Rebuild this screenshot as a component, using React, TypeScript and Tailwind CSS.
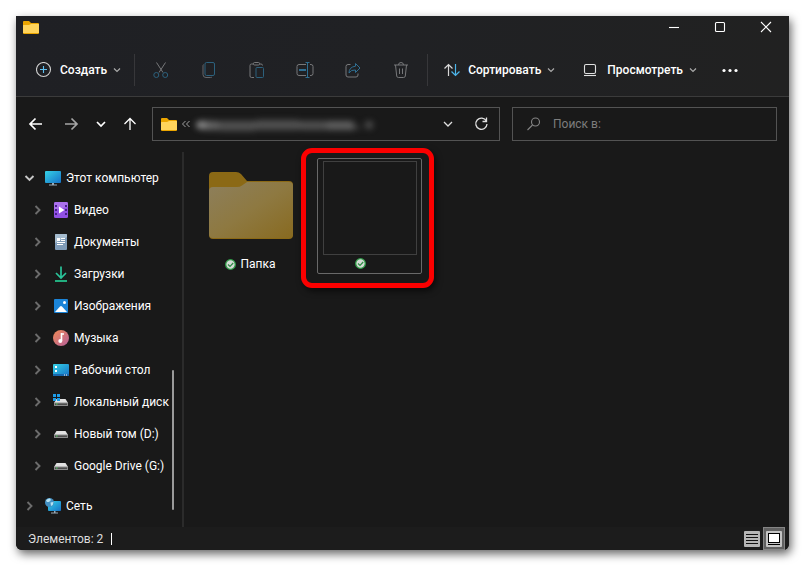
import { ReactNode } from "react";

const tree = [
    { label: "Видео", icon: <VideoIcon /> },
    { label: "Документы", icon: <DocumentIcon /> },
    { label: "Загрузки", icon: <DownloadIcon /> },
    { label: "Изображения", icon: <PicturesIcon /> },
    { label: "Музыка", icon: <MusicIcon /> },
    { label: "Рабочий стол", icon: <DesktopIcon /> },
    { label: "Локальный диск", icon: <DriveIcon system /> },
    { label: "Новый том (D:)", icon: <DriveIcon /> },
    { label: "Google Drive (G:)", icon: <DriveIcon /> },
];

export default function App() {
    return (
        <div className="min-h-screen bg-white p-4 flex flex-col font-['Roboto','Noto_Sans',sans-serif] text-xs text-white">
            <div className="flex-1 flex flex-col bg-[#191919] rounded-b-md shadow-[2px_4px_10px_rgba(0,0,0,0.6)]">
                <header className="bg-linear-to-r from-[#1f2024] via-[#202124] to-[#212121] border-b border-[#3b3b3b]">
                    <TitleBar />
                    <Toolbar />
                </header>
                <AddressRow />
                <div className="flex-1 flex">
                    <Sidebar />
                    <Files />
                </div>
                <StatusBar />
            </div>
        </div>
    );
}

function TitleBar() {
    return (
        <div className="h-[22px] flex items-center pl-[7px]">
            <FolderSmall />
            <div className="ml-auto flex h-full">
                <WindowButton label="Свернуть">
                    <path d="M1 6.5h10" />
                </WindowButton>
                <WindowButton label="Развернуть">
                    <rect x="1.5" y="1.5" width="9" height="9" rx="1" />
                </WindowButton>
                <WindowButton label="Закрыть">
                    <path d="M1 1l10 10M11 1L1 11" />
                </WindowButton>
            </div>
        </div>
    );
}

function WindowButton({ label, children }: { label: string; children: ReactNode }) {
    return (
        <button aria-label={label} className="w-[46px] flex items-center justify-center">
            <svg className="w-3 h-3" viewBox="0 0 12 12" fill="none" stroke="#fff" strokeWidth="1.1">
                {children}
            </svg>
        </button>
    );
}

function Toolbar() {
    return (
        <div className="h-[58px] pt-4 pb-2.5 pl-5 flex items-stretch font-medium">
            <button className="flex items-center gap-2">
                <svg className="w-4 h-4" viewBox="0 0 16 16" fill="none">
                    <circle cx="7.5" cy="7.5" r="7" stroke="#d0d0d0" strokeWidth="1.1" />
                    <path d="M7.5 4v7M4 7.5h7" stroke="#5fc0f0" strokeWidth="1.1" />
                </svg>
                Создать
                <ChevronSmall />
            </button>
            <div className="w-px bg-[#37373a] ml-[13px] mr-0.5" />
            <ToolButton label="Вырезать">
                <path d="M3.5 .5l6.500 10M12.500 .5L6 10.500" stroke="#77787a" />
                <circle cx="3.300" cy="13" r="2.500" stroke="#2c617d" />
                <circle cx="12.200" cy="13" r="2.500" stroke="#2c617d" />
            </ToolButton>
            <ToolButton label="Копировать">
                <path d="M2.500 2.500q-.5.5-.5 1.500v8.500q0 3 3 3h4.500q1 0 1.500-.5" stroke="#66676a" />
                <rect x="4" y=".5" width="9.500" height="13" rx="1.500" stroke="#2c617d" />
            </ToolButton>
            <ToolButton label="Вставить">
                <path d="M4.500 2H2.500Q1 2 1 3.500v10.500Q1 15.500 2.500 15.500h2.500M10.500 2h1.500q1.500 0 1.500 1.500" stroke="#77787a" />
                <rect x="4.500" y=".5" width="6" height="2.500" rx="1" stroke="#77787a" />
                <rect x="7" y="5.500" width="7.500" height="10" rx="1" stroke="#2c617d" />
            </ToolButton>
            <ToolButton label="Переименовать">
                <path d="M9 2.500H2Q0 2.500 0 4.500v7q0 2 2 2h7M13 2.500h1q2 0 2 2v7q0 2-2 2h-1" stroke="#77787a" />
                <path d="M8.500 .5h4M10.500 .5v15M8.500 15.500h4" stroke="#2f6f92" />
                <path d="M2 8h7" stroke="#2f6f92" strokeWidth="2" />
            </ToolButton>
            <ToolButton label="Поделиться">
                <path d="M5.500 2.500H3Q1 2.500 1 4.500v8.500q0 2 2 2h8q2 0 2-2v-1.500" stroke="#77787a" />
                <path d="M10.500 1.500L15 6l-4.500 4.500V8Q6 7.500 4 11q0-6 6.500-6.800z" stroke="#2f6f92" strokeLinejoin="round" />
            </ToolButton>
            <ToolButton label="Удалить">
                <path d="M1 3h14M5.500 3Q5.500.5 8 .5t2.500 2.500M2.500 3l1.200 11q.2 1.500 1.700 1.500h5.200q1.500 0 1.700-1.500L13.500 3M6.500 6.500v5.500M9.500 6.500v5.500" stroke="#77787a" />
            </ToolButton>
            <div className="w-px bg-[#37373a] ml-0.5 mr-4" />
            <button className="flex items-center gap-2">
                <svg className="w-4 h-4" viewBox="0 0 16 16" fill="none" strokeWidth="1.2">
                    <path d="M4.500 14V2.500M.5 6.500l4-4 4 4" stroke="#d8d8d8" />
                    <path d="M11.500 2v11.500M7.500 9.500l4 4 4-4" stroke="#4db5ea" />
                </svg>
                Сортировать
                <ChevronSmall />
            </button>
            <button className="flex items-center gap-2 ml-7">
                <svg className="w-4 h-4" viewBox="0 0 16 16" fill="none" stroke="#e0e0e0" strokeWidth="1.1">
                    <rect x="1.500" y="2.500" width="11" height="9" rx="1.500" />
                    <path d="M1 13.500h12" />
                </svg>
                Просмотреть
                <ChevronSmall />
            </button>
            <button aria-label="Дополнительно" className="ml-[25px]">
                <svg className="w-4 h-4" viewBox="0 0 16 16" fill="#fff">
                    <circle cx="2" cy="8.500" r="1.600" />
                    <circle cx="8" cy="8.500" r="1.600" />
                    <circle cx="14" cy="8.500" r="1.600" />
                </svg>
            </button>
        </div>
    );
}

function ToolButton({ label, children }: { label: string; children: ReactNode }) {
    return (
        <button aria-label={label} className="w-12 flex items-center justify-center">
            <svg className="w-4 h-4 overflow-visible" viewBox="0 0 16 16" fill="none">
                {children}
            </svg>
        </button>
    );
}

function AddressRow() {
    return (
        <div className="flex items-center pt-2.5 pb-[11px] pr-3">
            <div className="flex items-center pl-3 pr-3.5">
                <NavButton label="Назад" className="w-4 mr-[19px]">
                    <path d="M14 8H2.500M7.500 2.500L2 8l5.500 5.500" stroke="#fff" />
                </NavButton>
                <NavButton label="Вперед" className="w-4 mr-3.5">
                    <path d="M2 8h11.500M8.500 2.500L14 8l-5.500 5.500" stroke="#a5a5a5" />
                </NavButton>
                <NavButton label="Последние расположения" className="w-4 mr-[13px]">
                    <path d="M4 6l4 4 4-4" stroke="#fff" />
                </NavButton>
                <NavButton label="Вверх" className="w-4">
                    <path d="M8 14V2.500M2.500 8L8 2.500 13.500 8" stroke="#fff" strokeWidth="1.300" />
                </NavButton>
            </div>
            <div className="flex-1 h-[34px] border border-[#535353] flex items-center pl-2 pr-2.5">
                <FolderSmall />
                <svg className="w-2 h-2 ml-[5px]" viewBox="0 0 8 8" fill="none" stroke="#a0a0a0">
                    <path d="M3.500 1l-3 3 3 3M7.500 1l-3 3 3 3" />
                </svg>
                <svg className="w-[190px] h-5 ml-1 blur-[3px]" viewBox="0 0 190 20" fill="#777">
                    <ellipse cx="8" cy="11" rx="6" ry="4" fill="#999" />
                    <rect x="9" y="7" width="16" height="9" rx="3" opacity=".8" />
                    <rect x="24" y="7" width="38" height="10" rx="3" opacity=".6" />
                    <rect x="61" y="6" width="45" height="10" rx="3" opacity=".6" />
                    <rect x="105" y="7" width="28" height="9" rx="3" opacity=".6" />
                    <rect x="132" y="7" width="28" height="9" rx="3" opacity=".75" />
                    <rect x="156" y="12" width="10" height="3" opacity=".5" />
                    <circle cx="175" cy="11" r="4" opacity=".6" />
                </svg>
                <button aria-label="Предыдущие расположения" className="ml-auto">
                    <svg className="w-3 h-3" viewBox="0 0 12 12" fill="none" stroke="#e0e0e0" strokeWidth="1.300">
                        <path d="M2 4l4 4 4-4" />
                    </svg>
                </button>
                <button aria-label="Обновить" className="ml-[19px]">
                    <svg className="w-4 h-4" viewBox="0 0 16 16" fill="none" stroke="#e0e0e0" strokeWidth="1.300">
                        <path d="M13.300 5A5.600 5.600 0 1 0 14 8M13.500 1.500V5.500H9.500" />
                    </svg>
                </button>
            </div>
            <label className="ml-3 w-[265px] h-[34px] border border-[#535353] flex items-center pl-3.5">
                <svg className="w-3.5 h-3.5" viewBox="0 0 14 14" fill="none" stroke="#858585" strokeWidth="1.100">
                    <circle cx="8.500" cy="5" r="4" />
                    <path d="M5.500 8L.5 13" />
                </svg>
                <input
                    type="text"
                    aria-label="Поиск"
                    placeholder="Поиск в:"
                    className="ml-3 min-w-0 flex-1 bg-transparent outline-none placeholder:text-[#7d7d7d]"
                />
            </label>
        </div>
    );
}

function NavButton({ label, className, children }: { label: string; className: string; children: ReactNode }) {
    return (
        <button aria-label={label} className={className}>
            <svg className="w-4 h-4" viewBox="0 0 16 16" fill="none" strokeWidth="1.700">
                {children}
            </svg>
        </button>
    );
}

function Sidebar() {
    return (
        <aside className="flex border-r-2 border-[#2b2b2b]">
            <nav className="w-[149px] pt-2.5 pb-[5px]">
                <TreeRow label="Этот компьютер" icon={<ComputerIcon />} open />
                <div className="pl-2">
                    {tree.map((item) => (
                        <TreeRow key={item.label} label={item.label} icon={item.icon} />
                    ))}
                </div>
                <div className="mt-2">
                    <TreeRow label="Сеть" icon={<NetworkIcon />} />
                </div>
            </nav>
            <div className="w-[17px] flex flex-col justify-end pb-[17px] pl-[7px]">
                <div className="w-0.5 h-[140px] bg-[#9a9a9a] rounded-full" />
            </div>
        </aside>
    );
}

function TreeRow({ label, icon, open }: { label: string; icon: ReactNode; open?: boolean }) {
    return (
        <a href="#" className="h-8 pl-2 flex items-center whitespace-nowrap">
            <svg className="w-3 h-3 shrink-0 mr-[9px]" viewBox="0 0 12 12" fill="none" strokeWidth="1.900">
                {open ? (
                    <path d="M1.500 4l4 4 4-4" stroke="#c8c8c8" />
                ) : (
                    <path d="M3.500 2l4 4-4 4" stroke="#6c6c6c" />
                )}
            </svg>
            <svg className="w-4 h-4 shrink-0 mr-[5px]" viewBox="0 0 16 16" fill="none">
                {icon}
            </svg>
            {label}
        </a>
    );
}

function Files() {
    return (
        <main className="flex-1 pt-1.5 pl-3.5 flex items-start gap-3.5">
            <div className="w-[105px] h-[116px] pt-3.5 flex flex-col items-center">
                <svg className="w-[84px] h-[67px]" viewBox="0 0 84 67">
                    <defs>
                        <linearGradient id="front" x1="0" y1="0" x2="1" y2="1">
                            <stop offset="0" stopColor="#8d7f5c" />
                            <stop offset=".5" stopColor="#8e7941" />
                            <stop offset="1" stopColor="#886a20" />
                        </linearGradient>
                    </defs>
                    <path d="M0 4Q0 0 4 0h23q3 0 5 2l6 7h42q4 0 4 4v50q0 4-4 4H4q-4 0-4-4z" fill="#8b6915" />
                    <path d="M0 19q0-4 4-4h24q3 0 5-1.500L38 10h42q4 0 4 4v48q0 4-4 4H4q-4 0-4-4z" fill="url(#front)" />
                </svg>
                <div className="mt-[17px] flex items-center gap-1">
                    <SyncedIcon />
                    Папка
                </div>
            </div>
            <div className="relative w-[105px] h-[116px]">
                <div className="h-full border border-[#696969] rounded-xs pt-0.5 flex flex-col items-center">
                    <div className="w-[94px] h-[94px] border border-[#404040]" />
                    <div className="mt-[3px] pr-[18px]">
                        <SyncedIcon />
                    </div>
                </div>
                <div className="absolute -left-4 -right-3 -top-2.5 -bottom-3.5 border-[5px] border-[#fb0000] rounded-[11px] shadow-[2px_3px_6px_rgba(0,0,0,0.6)]" />
            </div>
        </main>
    );
}

function StatusBar() {
    return (
        <footer className="h-[23px] bg-[#1c1c1c] rounded-b-md flex items-center pl-3 pr-1 text-[#dedede]">
            Элементов: 2
            <div className="ml-2 w-px h-3 bg-white" />
            <button aria-label="Таблица" className="ml-auto mr-[3px]">
                <svg className="w-4 h-4" viewBox="0 0 16 16">
                    <rect width="16" height="16" rx="1" fill="#b5b5b5" />
                    <path d="M2 3.500h12M2 6.500h12M2 9.500h12M2 12.500h12" stroke="#111" />
                </svg>
            </button>
            <button aria-label="Крупные значки" className="w-[22px] h-full border border-[#858585] bg-[#616161] flex items-center justify-center">
                <svg className="w-4 h-4" viewBox="0 0 16 16">
                    <rect width="16" height="16" rx="1" fill="#c4c4c4" />
                    <rect x="2.500" y="2.500" width="11" height="9" fill="#fff" stroke="#000" />
                    <path d="M2 13.500h12" stroke="#000" />
                </svg>
            </button>
        </footer>
    );
}

function ChevronSmall() {
    return (
        <svg className="w-2 h-2 -ml-0.5" viewBox="0 0 8 8" fill="none" stroke="#aaa" strokeWidth="1.200">
            <path d="M1 2.500l3 3 3-3" />
        </svg>
    );
}

function FolderSmall() {
    return (
        <svg className="w-4 h-[13px]" viewBox="0 0 16 13">
            <path d="M0 1q0-1 1-1h5l2 2h7q1 0 1 1v9q0 1-1 1H1q-1 0-1-1z" fill="#eba500" />
            <path d="M0 4.500q0-.5.5-.5H6l2-1h7.500q.5 0 .5.500v8q0 .5-.5.500H.5q-.5 0-.5-.5z" fill="#ffd45c" />
        </svg>
    );
}

function SyncedIcon() {
    return (
        <svg className="w-[11px] h-[11px]" viewBox="0 0 11 11" fill="none">
            <circle cx="5.500" cy="5.500" r="4.800" fill="#d5dbd5" stroke="#2f9e48" strokeWidth="1.300" />
            <path d="M3 5.500l2 2 3.200-3.500" stroke="#2d8a44" strokeWidth="1.200" />
        </svg>
    );
}

function ComputerIcon() {
    return (
        <>
            <defs>
                <linearGradient id="screen" x1="0" y1="0" x2="1" y2="1">
                    <stop offset="0" stopColor="#35d2e6" />
                    <stop offset="1" stopColor="#1672c8" />
                </linearGradient>
            </defs>
            <rect y="1" width="16" height="12" rx="1" fill="url(#screen)" />
            <path d="M7 13h2v1.500h3v1H4v-1h3z" fill="#9aa9b5" />
        </>
    );
}

function VideoIcon() {
    return (
        <>
            <rect x="1" width="14" height="16" rx="1.500" fill="#9150e4" />
            <path d="M2.500 0h11Q15 0 15 1.500V5L1 8V1.500Q1 0 2.500 0z" fill="#ab70ed" />
            <path d="M2 3h2v2H2zM2 7h2v2H2zM2 11h2v2H2zM12 3h2v2h-2zM12 7h2v2h-2zM12 11h2v2h-2z" fill="#47208a" />
            <path d="M6 4.500l5.500 3.500L6 11.500z" fill="#fff" />
        </>
    );
}

function DocumentIcon() {
    return (
        <>
            <rect x="2" width="12" height="16" rx="1" fill="#7f9cb9" />
            <path d="M3 0h10q1 0 1 1v2L2 9V1q0-1 1-1z" fill="#a5bccf" />
            <path d="M4 4h3v3H4z" fill="#fff" />
            <path d="M8 4.500h4M8 6.500h4M4 8.500h8M4 10.500h6" stroke="#fff" />
        </>
    );
}

function DownloadIcon() {
    return (
        <>
            <path d="M8 .5v11M3 7l5 5 5-5" stroke="#2ac49a" strokeWidth="1.700" />
            <path d="M2 15h12" stroke="#22ae7f" strokeWidth="2" />
        </>
    );
}

function PicturesIcon() {
    return (
        <>
            <rect x="1" y="1" width="14" height="14" rx="1" fill="#1b84d8" />
            <path d="M2 14l5-5.500q1-1 2 0L14 14z" fill="#fff" />
            <circle cx="11.500" cy="4.500" r="1.500" fill="#fff" />
        </>
    );
}

function MusicIcon() {
    return (
        <>
            <defs>
                <linearGradient id="music" x1="0" y1="0" x2="1" y2="1">
                    <stop offset="0" stopColor="#f08a55" />
                    <stop offset="1" stopColor="#b55f9a" />
                </linearGradient>
            </defs>
            <circle cx="8" cy="8" r="8" fill="url(#music)" />
            <path d="M8.500 3v8M8 4h3" stroke="#fff" strokeWidth="1.600" />
            <circle cx="7.300" cy="11" r="2" fill="#fff" />
        </>
    );
}

function DesktopIcon() {
    return (
        <>
            <rect y="2" width="16" height="12" rx="1" fill="url(#screen)" />
            <path d="M2 4h2v2H2zM2 8h2v2H2z" fill="#fff" />
            <path d="M0 12h16v1q0 1-1 1H1q-1 0-1-1z" fill="#1766ad" />
            <path d="M11 13h1M13 13h1" stroke="#fff" />
        </>
    );
}

function DriveIcon({ system }: { system?: boolean }) {
    return (
        <>
            <path d="M3.500 5h9L15 9H1z" fill="#e2e2e2" />
            <path d="M1 8.500h14v3q0 .5-.5.500h-13q-.5 0-.5-.5z" fill="#8c8c8c" />
            <path d="M2 9.500h12v1.500H2z" fill="#4c4c4c" />
            <path d="M3 10h1.500" stroke="#4bdc60" />
            {system && <path d="M0 0h3v3H0zM4 0h3v3H4zM0 4h3v3H0zM4 4h3v3H4z" fill="#1c9be8" />}
        </>
    );
}

function NetworkIcon() {
    return (
        <>
            <rect x="3" y="3" width="13" height="10" rx="1" fill="url(#screen)" />
            <path d="M9 13h1.500v1.500H13v1H6v-1h3z" fill="#9aa9b5" />
            <circle cx="4.500" cy="4.500" r="4.500" fill="#438fc2" />
            <path d="M1 2.500Q3 0 5 .5L6 2 4 4 2 4zM5.500 4.500L8.500 4Q8.500 7 6 8z" fill="#b5e2f2" />
        </>
    );
}
